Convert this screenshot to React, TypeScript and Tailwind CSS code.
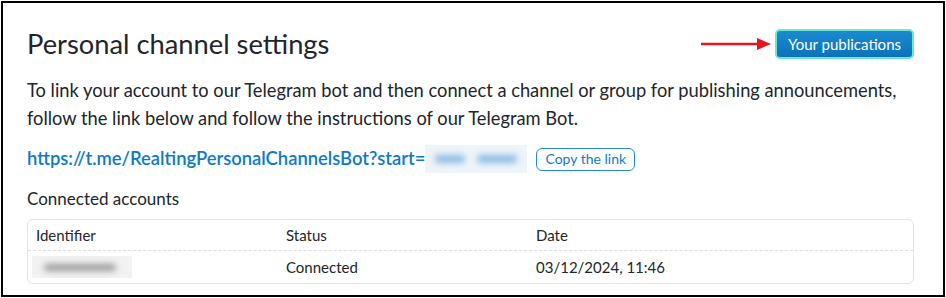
import React from "react";

export default function App() {
  return (
    <div className="w-[946px] h-[298px] bg-white p-px" style={{ fontFamily: 'Lato, sans-serif' }}>
      <div className="w-[944px] h-[296px] border-2 border-black flex flex-col px-[24px] pt-[21px] text-[#212529]">
        <div className="flex items-center justify-between h-[40px] pr-[5px]">
          <h1 className="text-[27.3px] leading-[32px] font-normal">Personal channel settings</h1>
          <div className="flex items-center">
            <div className="relative w-[70px] h-[12px] mr-[4px]">
              <svg width="70" height="12" viewBox="0 0 70 12">
                <line x1="0" y1="6" x2="58" y2="6" stroke="#e8141b" strokeWidth="2.5" />
                <polygon points="56,0 70,6 56,12" fill="#e8141b" />
              </svg>
            </div>
            <button className="h-[30px] px-[11px] rounded-[5px] border-2 border-[#6fe3d6] bg-gradient-to-b from-[#1a8bd0] to-[#0a73ba] text-white text-[15px] leading-[20px]">
              Your publications
            </button>
          </div>
        </div>
        <p className="mt-[12px] text-[18.3px] leading-[28px]">
          To link your account to our Telegram bot and then connect a channel or group for publishing announcements,
          follow the link below and follow the instructions of our Telegram Bot.
        </p>
        <div className="mt-[13px] flex items-center h-[28px]">
          <span className="text-[18.4px] text-[#0e7ac7] font-semibold">https://t.me/RealtingPersonalChannelsBot?start=</span>
          <span className="relative w-[102px] h-[28px] bg-[#eef4fa] overflow-hidden">
            <span className="absolute left-[10px] top-[10px] w-[30px] h-[8px] rounded-full bg-[#8cbbe3] blur-[3px]" />
            <span className="absolute left-[52px] top-[10px] w-[40px] h-[8px] rounded-full bg-[#8cbbe3] blur-[3px]" />
          </span>
          <button className="ml-[9px] h-[23px] px-[8px] rounded-[6px] border border-[#2a89d4] text-[#1479c8] text-[14px] leading-[20px]">
            Copy the link
          </button>
        </div>
        <div className="mt-[15px] text-[17px] leading-[22px]">Connected accounts</div>
        <div className="mt-[9px] mr-[5px] border border-[#e3e3e3] rounded-[6px] text-[15px]">
          <div className="grid grid-cols-[250px_250px_1fr] h-[31px] items-center border-b border-dashed border-[#dedede] px-[8px]">
            <div>Identifier</div>
            <div>Status</div>
            <div>Date</div>
          </div>
          <div className="grid grid-cols-[250px_250px_1fr] h-[32px] items-center px-[8px]">
            <div className="relative -ml-[4px] w-[100px] h-[22px] bg-[#f2f2f2] overflow-hidden">
              <span className="absolute left-[12px] top-[8px] w-[72px] h-[7px] rounded-full bg-[#9a9a9a] blur-[3px]" />
            </div>
            <div>Connected</div>
            <div>03/12/2024, 11:46</div>
          </div>
        </div>
      </div>
    </div>
  );
}
